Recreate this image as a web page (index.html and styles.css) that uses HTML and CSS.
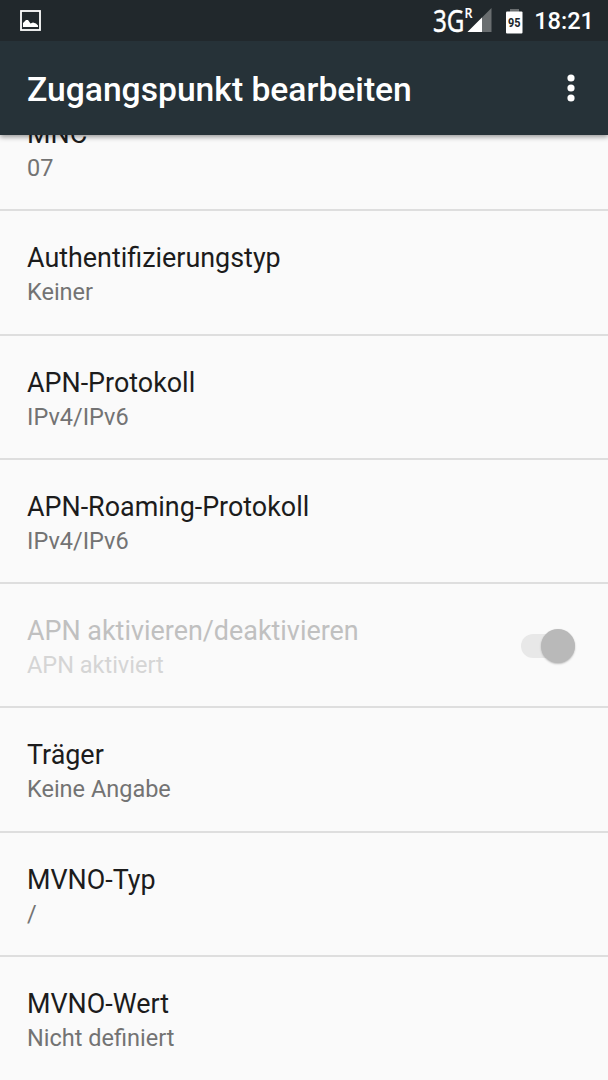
FILE: index.html
```html
<!DOCTYPE html>
<html lang="de">
<head>
<meta charset="utf-8">
<title>Zugangspunkt bearbeiten</title>
<link rel="stylesheet" href="styles.css">
</head>
<body>
<div class="screen">
  <header class="top">
    <div class="status">
      <svg class="picture" width="21" height="21" viewBox="0 0 21 21">
        <rect x="1" y="1" width="19" height="19" fill="none" stroke="#fff" stroke-width="1.8"/>
        <path d="M3 17v-4l3-3 2 0 2.500 3.500 2.500-1 3 1 2 2v1.500z" fill="#fff"/>
      </svg>
      <svg class="network" width="60" height="41" viewBox="0 0 60 41">
        <text class="net" x="1" y="32" textLength="31.500" lengthAdjust="spacingAndGlyphs">3G</text>
        <text class="roam" x="32.500" y="18" textLength="8" lengthAdjust="spacingAndGlyphs">R</text>
        <path d="M59.500 8v24H35.500z" fill="#6a6e70"/>
        <path d="M50 17.500V32H35.500z" fill="#fff"/>
      </svg>
      <svg class="battery" width="17" height="25" viewBox="0 0 17 25">
        <path d="M4 0h9v3H4z" fill="#6a6e70"/>
        <rect y="2.500" width="16.500" height="22" rx="1" fill="#fff"/>
        <text class="level" x="2" y="17.500" textLength="12.500" lengthAdjust="spacingAndGlyphs">95</text>
      </svg>
      <span class="clock">18:21</span>
    </div>
    <div class="appbar">
      <h1 class="heading">Zugangspunkt bearbeiten</h1>
      <svg class="more" width="8" height="28" viewBox="0 0 8 28" fill="#fff">
        <circle cx="4" cy="4" r="3.600"/><circle cx="4" cy="14" r="3.600"/><circle cx="4" cy="24" r="3.600"/>
      </svg>
    </div>
  </header>
  <main class="list">
    <div class="row"><div class="title">MNC</div><div class="summary">07</div></div>
    <div class="row"><div class="title">Authentifizierungstyp</div><div class="summary">Keiner</div></div>
    <div class="row"><div class="title">APN-Protokoll</div><div class="summary">IPv4/IPv6</div></div>
    <div class="row"><div class="title">APN-Roaming-Protokoll</div><div class="summary">IPv4/IPv6</div></div>
    <div class="row disabled">
      <div class="title">APN aktivieren/deaktivieren</div><div class="summary">APN aktiviert</div>
      <div class="switch"><div class="thumb"></div></div>
    </div>
    <div class="row"><div class="title">Träger</div><div class="summary">Keine Angabe</div></div>
    <div class="row"><div class="title">MVNO-Typ</div><div class="summary">/</div></div>
    <div class="row"><div class="title">MVNO-Wert</div><div class="summary">Nicht definiert</div></div>
  </main>
</div>
</body>
</html>
```
FILE: styles.css
```css
* { box-sizing: border-box; }
body { margin: 0; background: #fafafa; font-family: Roboto, "Liberation Sans", sans-serif; }
.screen { height: 1080px; overflow: hidden; }
.top { position: relative; z-index: 1; height: 135px; background: #263238; box-shadow: 0 2px 5px rgba(0, 0, 0, .4); }
.status { display: flex; align-items: center; height: 41px; padding: 0 14px 0 20px; background: #21282c; color: #fff; }
.network { margin-left: auto; }
.battery { margin: 1px 11px 0 14px; }
.net { font: 31px "Noto Sans", sans-serif; fill: #fff; stroke: #fff; stroke-width: .4px; }
.roam { font: 600 14px "Noto Sans", sans-serif; fill: #fff; }
.level { font: 700 13px Roboto, sans-serif; fill: #21282c; }
.clock { margin-top: 2px; font-size: 23.6px; font-weight: 500; line-height: 41px; }
.appbar { display: flex; align-items: center; justify-content: space-between; height: 94px; padding: 0 33px 0 27px; }
.heading { margin: 4px 0 0; font-size: 33.65px; font-weight: 500; line-height: 40px; color: #fff; }
.list { margin-top: -48px; }
.row { display: grid; grid-template-columns: 1fr auto; align-content: start; height: 124.25px; padding: 31px 33px 0 27px; border-bottom: 2px solid #dedede; }
.row:last-child { border-bottom: 0; }
.title { grid-column: 1; font-size: 26.9px; line-height: 32px; color: #1c1c1c; }
.summary { grid-column: 1; margin-top: 4px; font-size: 23.5px; line-height: 28px; color: #737373; }
.disabled .title { color: #c0c0c0; }
.disabled .summary { color: #d5d5d5; }
.switch { grid-column: 2; grid-row: 1 / 3; align-self: center; display: flex; align-items: center; justify-content: flex-end; width: 54px; height: 24px; margin-bottom: 3px; border-radius: 12px; background: #e8e8e8; }
.thumb { flex: none; width: 34px; height: 34px; border-radius: 50%; background: #b9b9b9; box-shadow: 0 1px 2px rgba(0, 0, 0, .25); }
```
